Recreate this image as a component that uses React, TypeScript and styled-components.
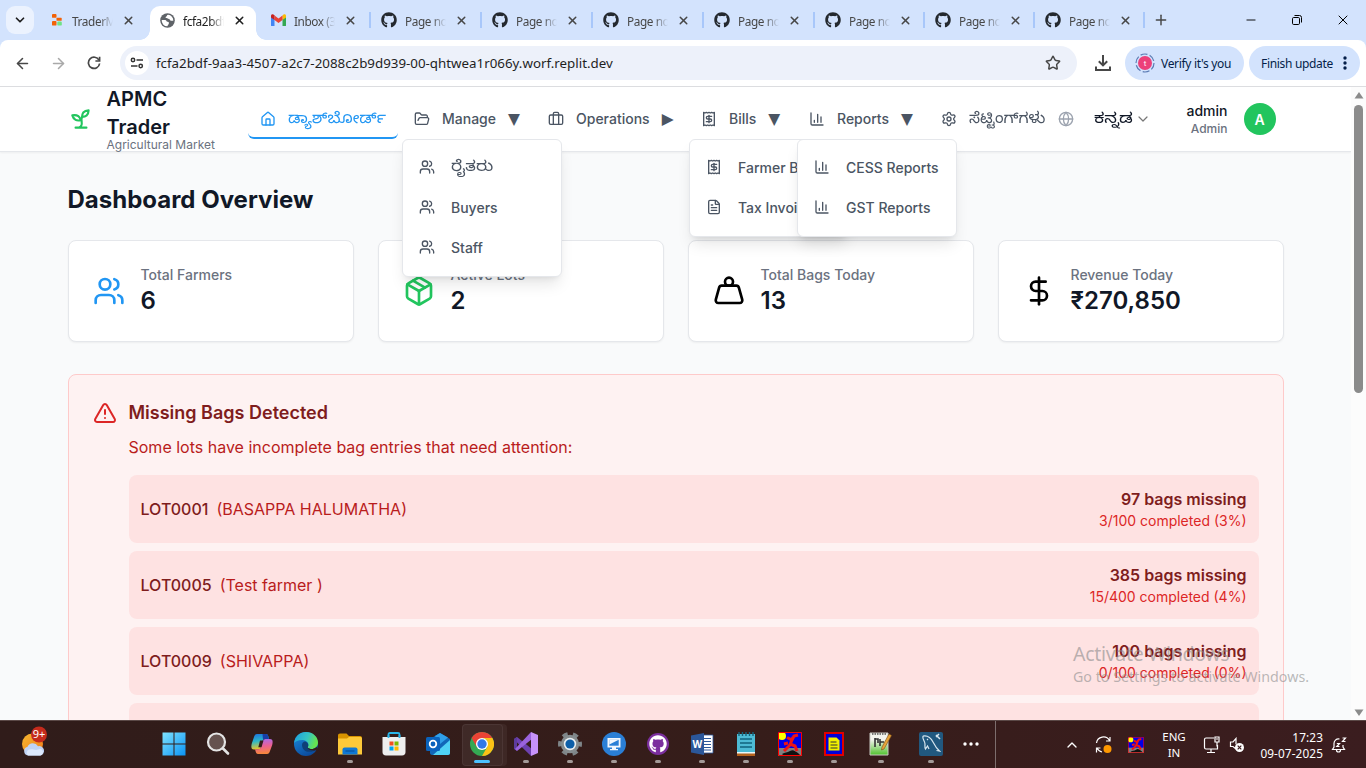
import React from 'react';
import styled, { createGlobalStyle } from 'styled-components';
import {
  Home, FolderOpen, Briefcase, Receipt, Settings, Globe, ChevronDown, Users, FileText,
  Package, Weight, DollarSign, TriangleAlert, X, Plus, Minus, ArrowLeft, ArrowRight, Star, ChevronUp,
} from 'lucide-react';
import { FaGithub } from 'react-icons/fa';

const GlobalStyle = createGlobalStyle`
  * { box-sizing: border-box; }
  body { margin: 0; overflow: hidden; font-family: Inter, "Noto Sans", sans-serif; }
  h1, h2, h3, p { margin: 0; }
  svg { display: block; flex: none; }
`;

const ui = `"Noto Sans", "Open Sans", sans-serif`;

const Screen = styled.div`
  position: relative;
  width: 1366px;
  height: 768px;
  display: flex;
  flex-direction: column;
  overflow: hidden;
`;

/* ---------- browser chrome ---------- */

const TabStrip = styled.div`
  height: 40px;
  flex: none;
  display: flex;
  background: #d3e3fd;
  font: 12px ${ui};
  color: #474747;
`;

const TabSearch = styled.div`
  width: 28px;
  height: 28px;
  margin: 6px 6px 0;
  border-radius: 9px;
  background: #ebf2fe;
  display: flex;
  align-items: center;
  justify-content: center;
  color: #1f1f1f;
`;

const Tab = styled.div<{ $w: number; $active?: boolean; $sep?: boolean; $pad?: number }>`
  position: relative;
  width: ${p => p.$w}px;
  height: 34px;
  margin-top: 6px;
  padding: 0 0 6px ${p => p.$pad ?? 10}px;
  display: flex;
  align-items: center;
  border-radius: 10px 10px 0 0;
  background: ${p => (p.$active ? '#fff' : 'transparent')};
  color: ${p => (p.$active ? '#1f1f1f' : '#474747')};
  &::before {
    content: '';
    display: ${p => (p.$active || p.$sep ? 'block' : 'none')};
    position: absolute;
    left: ${p => (p.$active ? -10 : 0)}px;
    bottom: ${p => (p.$active ? 0 : 12)}px;
    width: ${p => (p.$active ? 10 : 2)}px;
    height: ${p => (p.$active ? 10 : 16)}px;
    background: ${p => (p.$active ? 'radial-gradient(circle at 0 0, transparent 9.5px, #fff 10px)' : '#a8c7fa')};
  }
  &::after {
    content: '';
    display: ${p => (p.$active ? 'block' : 'none')};
    position: absolute;
    right: -10px;
    bottom: 0;
    width: 10px;
    height: 10px;
    background: radial-gradient(circle at 10px 0, transparent 9.5px, #fff 10px);
  }
`;

const TabTitle = styled.span`
  width: 41px;
  margin: 1px 9px 0 8px;
  overflow: hidden;
  white-space: nowrap;
  font-size: 11.8px;
  letter-spacing: -0.4px;
  mask-image: linear-gradient(90deg, #000 66%, transparent 100%);
`;

const NewTab = styled.div`
  position: relative;
  width: 40px;
  height: 28px;
  margin-top: 6px;
  display: flex;
  align-items: center;
  padding-left: 10px;
  &::before {
    content: '';
    position: absolute;
    left: 0;
    top: 6px;
    width: 2px;
    height: 16px;
    background: #a8c7fa;
  }
`;

const WindowButtons = styled.div`
  margin-left: auto;
  height: 40px;
  display: flex;
  color: #000;
`;

const WindowButton = styled.div`
  width: 46px;
  display: flex;
  align-items: center;
  justify-content: center;
`;

const ToolbarBack = styled.div`
  height: 47px;
  flex: none;
  background: #d3e3fd;
`;

const Toolbar = styled.div`
  height: 47px;
  padding-left: 4px;
  display: flex;
  align-items: center;
  background: #fff;
  border-radius: 8px 8px 0 0;
  border-bottom: 1px solid #dcdde0;
  font: 12px ${ui};
  color: #474747;
`;

const NavButton = styled.div<{ $dim?: boolean; $ml?: number }>`
  width: 36px;
  margin-left: ${p => p.$ml ?? 0}px;
  display: flex;
  justify-content: center;
  color: ${p => (p.$dim ? '#a9a9a9' : '#474747')};
`;

const AddressBar = styled.div`
  width: 957px;
  height: 34px;
  margin-left: 8px;
  padding: 0 16px 0 5px;
  border-radius: 17px;
  background: #edf1fa;
  display: flex;
  align-items: center;
`;

const SiteInfo = styled.div`
  width: 24px;
  height: 24px;
  border-radius: 50%;
  background: #fff;
  display: flex;
  align-items: center;
  justify-content: center;
`;

const Url = styled.span`
  flex: 1;
  margin-left: 7px;
  font-size: 13.33px;
  color: #1f1f1f;
  white-space: nowrap;
`;

const Pill = styled.div<{ $w: number; $ml: number; $pl: number; $gap: number }>`
  width: ${p => p.$w}px;
  height: 34px;
  margin-left: ${p => p.$ml}px;
  padding-left: ${p => p.$pl}px;
  border-radius: 17px;
  background: #d3e3fd;
  display: flex;
  align-items: center;
  gap: ${p => p.$gap}px;
  color: #041e49;
  letter-spacing: -0.32px;
  white-space: nowrap;
`;

/* ---------- page ---------- */

const Viewport = styled.div`
  height: 633px;
  flex: none;
  display: flex;
  overflow: hidden;
  background: #f9fafb;
`;

const Page = styled.div`
  width: 1351px;
  height: 633px;
  overflow: hidden;
  color: #111827;
`;

const Header = styled.header`
  height: 65px;
  background: #fff;
  border-bottom: 1px solid #e5e7eb;
  box-shadow: 0 1px 2px rgba(0, 0, 0, 0.05);
`;

const HeaderInner = styled.div`
  width: 1216px;
  height: 64px;
  margin: 0 auto;
  display: flex;
  align-items: center;
`;

const Brand = styled.div`
  width: 180.5px;
  display: flex;
  align-items: center;
  gap: 13px;
  color: #22c55e;
`;

const BrandTitle = styled.h1`
  width: 80px;
  font-size: 20px;
  line-height: 28px;
  font-weight: 600;
  color: #111827;
`;

const BrandSub = styled.p`
  margin-top: -4px;
  font-size: 12px;
  line-height: 16px;
  color: #6b7280;
  white-space: nowrap;
`;

const Nav = styled.nav`
  display: flex;
  gap: 4px;
  height: 64px;
  align-items: center;
`;

const NavItem = styled.div<{ $w: number; $active?: boolean }>`
  position: relative;
  width: ${p => p.$w}px;
  height: 40px;
  padding: 0 12px;
  display: flex;
  align-items: center;
  gap: 12px;
  border-radius: 6px;
  border-bottom: 2px solid ${p => (p.$active ? '#2196f3' : 'transparent')};
  padding-top: 1px;
  font-size: 14px;
  font-weight: 500;
  color: ${p => (p.$active ? '#2196f3' : '#4b5563')};
  white-space: nowrap;
`;

const Arrow = styled.span`
  font: 15.5px/16px "DejaVu Sans", sans-serif;
`;

const Menu = styled.div`
  position: absolute;
  left: 0;
  top: 40px;
  width: 160px;
  padding: 7px 0 9px;
  z-index: 10;
  background: #fff;
  border: 1px solid #e5e7eb;
  border-radius: 6px;
  box-shadow: 0 10px 15px -3px rgba(0, 0, 0, 0.1), 0 4px 6px -4px rgba(0, 0, 0, 0.1);
`;

const MenuItem = styled.div`
  height: 40px;
  padding-left: 16px;
  display: flex;
  align-items: center;
  gap: 16px;
  color: #4b5563;
`;

const Kannada = styled.span<{ $w: number; $stretch: number; $size?: number }>`
  width: ${p => p.$w}px;
  padding-top: 4px;
  font-family: "Noto Sans Kannada", "Nirmala UI", Inter, sans-serif;
  font-size: ${p => p.$size ?? 15}px;
  font-weight: 400;
  line-height: 20px;
  white-space: nowrap;
  transform: scaleX(${p => p.$stretch});
  transform-origin: 0 50%;
`;

const Account = styled.div`
  flex: 1;
  display: flex;
  align-items: center;
  padding-right: 8px;
  color: #9ca3af;
`;

const Language = styled.div`
  margin-left: 20px;
  display: flex;
  align-items: center;
  color: #111827;
`;

const UserName = styled.div`
  margin-left: auto;
  text-align: right;
  font-size: 14px;
  line-height: 20px;
  font-weight: 500;
  color: #111827;
`;

const UserRole = styled.div`
  font-size: 12px;
  line-height: 16px;
  color: #6b7280;
`;

const Avatar = styled.div`
  width: 32px;
  height: 32px;
  margin-left: 16px;
  border-radius: 50%;
  background: #22c55e;
  color: #fff;
  display: flex;
  align-items: center;
  justify-content: center;
  font-size: 14px;
  font-weight: 600;
`;

const Main = styled.main`
  width: 1216px;
  margin: 0 auto;
  padding-top: 32px;
`;

const PageTitle = styled.h2`
  margin-bottom: 24px;
  font-size: 24px;
  line-height: 32px;
  font-weight: 700;
`;

const Stats = styled.div`
  display: grid;
  grid-template-columns: repeat(4, 1fr);
  gap: 24px;
`;

const StatCard = styled.div<{ $color: string }>`
  height: 102px;
  padding: 24px;
  display: flex;
  align-items: center;
  gap: 16px;
  background: #fff;
  border: 1px solid #e5e7eb;
  border-radius: 8px;
  box-shadow: 0 1px 2px rgba(0, 0, 0, 0.05);
  color: ${p => p.$color};
`;

const StatLabel = styled.p`
  font-size: 14px;
  line-height: 20px;
  font-weight: 500;
  color: #6b7280;
`;

const StatValue = styled.p`
  font-size: 24px;
  line-height: 32px;
  font-weight: 600;
  color: #111827;
`;

const Alert = styled.section`
  margin-top: 32px;
  padding: 24px;
  display: flex;
  gap: 12px;
  background: #fef2f2;
  border: 1px solid #fecaca;
  border-radius: 8px;
  color: #dc2626;
  & > svg { margin-top: 2px; }
`;

const AlertBody = styled.div`
  flex: 1;
`;

const AlertTitle = styled.h3`
  font-size: 18px;
  line-height: 28px;
  font-weight: 600;
  color: #7f1d1d;
`;

const AlertText = styled.p`
  margin: 8px 0 16px;
  font-size: 16px;
  line-height: 24px;
  color: #b91c1c;
`;

const Lot = styled.div`
  height: 68px;
  margin-bottom: 8px;
  padding: 12px;
  display: flex;
  align-items: center;
  justify-content: space-between;
  background: #fee2e2;
  border-radius: 8px;
  font-size: 16px;
  line-height: 24px;
`;

const LotId = styled.span`
  font-weight: 500;
  color: #7f1d1d;
`;

const Farmer = styled.span`
  margin-left: 8px;
  color: #b91c1c;
`;

const Missing = styled.div`
  text-align: right;
  font-weight: 600;
  color: #7f1d1d;
`;

const Progress = styled.div`
  font-size: 14px;
  line-height: 20px;
  font-weight: 400;
  color: #dc2626;
`;

const Scrollbar = styled.div`
  width: 15px;
  height: 633px;
  padding: 5px 0 4px;
  display: flex;
  flex-direction: column;
  align-items: center;
  background: #fcfcfc;
  color: #8b8b8b;
`;

const Thumb = styled.div`
  width: 9px;
  height: 288px;
  margin: 6px 0 auto;
  border-radius: 5px;
  background: #8b8b8b;
`;

const Watermark = styled.div`
  position: absolute;
  left: 1073px;
  top: 641px;
  z-index: 30;
  font: 14.25px/20px ${ui};
  color: rgba(140, 140, 140, 0.6);
  white-space: nowrap;
`;

const WatermarkTitle = styled.div`
  font-size: 19.5px;
  line-height: 26px;
  letter-spacing: -0.3px;
`;

/* ---------- taskbar ---------- */

const Taskbar = styled.div`
  height: 48px;
  flex: none;
  display: flex;
  border-top: 1px solid #5b4947;
  background: linear-gradient(90deg, #301c1a, #361d1a 55%, #3b1d1f);
  color: #fff;
  font: 12px ${ui};
`;

const Weather = styled.div`
  width: 152px;
  padding: 5px 0 0 20px;
`;

const Task = styled.div<{ $w?: number; $run?: boolean; $current?: boolean }>`
  position: relative;
  width: ${p => p.$w ?? 44}px;
  height: 46px;
  display: flex;
  align-items: center;
  justify-content: center;
  &::after {
    content: '';
    display: ${p => (p.$run || p.$current ? 'block' : 'none')};
    position: absolute;
    bottom: 4px;
    width: ${p => (p.$current ? 16 : 6)}px;
    height: 3px;
    border-radius: 2px;
    background: ${p => (p.$current ? '#4cc2ff' : '#a39a98')};
  }
  &::before {
    content: '';
    display: ${p => (p.$current ? 'block' : 'none')};
    position: absolute;
    left: 2px;
    top: 3px;
    width: 39px;
    height: 40px;
    border-radius: 4px;
    background: rgba(255, 255, 255, 0.06);
    border: 1px solid rgba(255, 255, 255, 0.06);
    box-shadow: 4px 0 0 rgba(255, 255, 255, 0.05);
  }
  & > svg { position: relative; }
`;

const Tray = styled.div`
  flex: 1;
  margin-left: 9px;
  border-left: 1px solid #7d6e6d;
  display: flex;
  align-items: center;
`;

const TrayCell = styled.div<{ $w: number }>`
  width: ${p => p.$w}px;
  display: flex;
  justify-content: center;
  text-align: center;
  line-height: 16px;
  font-size: 11.5px;
`;

const Clock = styled.div`
  width: 77px;
  text-align: right;
  line-height: 16px;
  font-size: 11.8px;
  letter-spacing: 0.1px;
  white-space: nowrap;
`;

/* ---------- drawings ---------- */

const Sprout = () => (
  <svg width="26" height="26" viewBox="0 0 24 24" fill="none" stroke="currentColor" strokeWidth="2" strokeLinecap="round" strokeLinejoin="round">
    <path d="M7 20h10M10 20c5.5-2.5.8-6.4 3-10" />
    <path d="M9.5 9.4c1.1.8 1.8 2.2 2.3 3.7-2 .4-3.5.4-4.8-.3-1.2-.6-2.3-1.9-3-4.2 2.8-.5 4.4 0 5.5.8z" />
    <path d="M14.1 6a7 7 0 0 0-1.1 4c1.9-.1 3.3-.6 4.3-1.4 1-1 1.6-2.3 1.7-4.6-2.7.1-4 1-4.9 2z" />
  </svg>
);

const Bars = () => (
  <svg width="16" height="16" viewBox="0 0 24 24" fill="none" stroke="currentColor" strokeWidth="2" strokeLinecap="round" strokeLinejoin="round">
    <path d="M3 3v16a2 2 0 0 0 2 2h16M18 17V9M13 17V5M8 17v-3" />
  </svg>
);

const ReplitIcon = () => (
  <svg width="14" height="14" viewBox="0 0 14 14">
    <rect x="2" y="1" width="4.500" height="3.800" rx=".9" fill="#f26207" />
    <rect x="6.500" y="4.800" width="5.200" height="3" rx=".6" fill="#f26207" />
    <rect x="2" y="8" width="4.500" height="4.600" rx=".9" fill="#f26207" />
    <rect x="7.300" y="8.600" width="4.500" height="4" rx="1.200" fill="#6fe384" />
  </svg>
);

const PlanetIcon = () => (
  <svg width="15" height="15" viewBox="0 0 16 16">
    <circle cx="8" cy="8" r="7.800" fill="#5f6368" />
    <path d="M1.800 7.500h3.700c1.500 0 1 1.800 2.600 1.900 1.800.1 1.600 1.600 1 2.700-.4.800-1 1.300-1.300 2.100A6.200 6.200 0 0 1 1.800 7.500z" fill="#fff" />
    <path d="M8.700 1.900c-1.900.2-.9 1.700-2.300 2-.9.300-.4 1.400.6 1.500 1.100.100 1.400.9 2.500.9 1.300.100 1 1.900 2.300 1.900h2.400A6.200 6.200 0 0 0 8.700 1.900z" fill="#fff" />
  </svg>
);

const GmailIcon = () => (
  <svg width="15" height="12" viewBox="0 0 15 12">
    <path d="M0 2v9a.9.9 0 0 0 1 1h2.500V5z" fill="#4285f4" />
    <path d="M11.500 5v7H14a.9.9 0 0 0 1-1V2z" fill="#34a853" />
    <path d="M11.500 1.500V6L15 3.500V2c0-1.800-1.900-2.500-3.500-.5z" fill="#fbbc04" />
    <path d="M3.500 6V1.500l4 3 4-3V6l-4 3z" fill="#ea4335" />
    <path d="M0 2v1.500L3.500 6V1.500C2-.5 0 .2 0 2z" fill="#c5221f" />
  </svg>
);

const ReloadIcon = () => (
  <svg width="14" height="14" viewBox="0 0 14 14" fill="none" stroke="currentColor" strokeWidth="1.7">
    <path d="M12 4.200A5.600 5.600 0 1 0 12.600 7.500" />
    <path d="M12.600.8v4.200H8.400" />
  </svg>
);

const TuneIcon = () => (
  <svg width="14" height="12" viewBox="0 0 14 12" fill="none" stroke="#333" strokeWidth="1.500">
    <circle cx="3" cy="3" r="1.700" />
    <path d="M6.500 3H13M1 9h6.500" />
    <circle cx="10.700" cy="9" r="1.700" />
  </svg>
);

const DownloadIcon = () => (
  <svg width="18" height="18" viewBox="0 0 18 18" fill="none" stroke="#474747" strokeWidth="2">
    <path d="M9 1v10M4.800 7.200 9 11.400l4.200-4.200M2 12.500V16h14v-3.500" />
  </svg>
);

const ProfileIcon = () => (
  <svg width="20" height="20" viewBox="0 0 20 20">
    <circle cx="10" cy="10" r="9" fill="none" stroke="#5b7bb4" strokeWidth="1.200" strokeDasharray="7 2.400" />
    <circle cx="10" cy="10" r="7" fill="#ec407a" />
    <text x="10" y="13" fontSize="8" fill="#fff" textAnchor="middle" fontFamily="Roboto, sans-serif">t</text>
  </svg>
);

const DotsVertical = () => (
  <svg width="4" height="16" viewBox="0 0 4 16" fill="#041e49">
    <circle cx="2" cy="3" r="1.700" /><circle cx="2" cy="8" r="1.700" /><circle cx="2" cy="13" r="1.700" />
  </svg>
);

const RestoreIcon = () => (
  <svg width="10" height="10" viewBox="0 0 10 10" fill="none" stroke="#000">
    <rect x=".5" y="2.500" width="7" height="7" rx="1.200" />
    <path d="M2.500.5h5a2 2 0 0 1 2 2v5" />
  </svg>
);

const WeatherIcon = () => (
  <svg width="30" height="32" viewBox="0 0 30 32">
    <defs><linearGradient id="sun" x2="1" y2="1"><stop stopColor="#f5b931" /><stop offset="1" stopColor="#f07818" /></linearGradient></defs>
    <circle cx="12.500" cy="18" r="10.500" fill="url(#sun)" />
    <path d="M8 29.500a4.500 4.500 0 0 1-.5-8.800 6 6 0 0 1 10.500-.5 4.500 4.500 0 0 1 2.500 9.300z" fill="#bfd3f5" />
    <path d="M8 29.500a4 4 0 0 1 0-5.500c4-2 7 1 10-.5 3-1.500 5 .5 5 3-.5 2-1.500 3-3 3z" fill="#dce8fc" />
    <circle cx="19" cy="8.500" r="8" fill="#c42b1c" />
    <text x="19" y="12.200" fontSize="11" fill="#fff" textAnchor="middle" fontFamily="Noto Sans, sans-serif">9+</text>
  </svg>
);

const WindowsIcon = () => (
  <svg width="24" height="24" viewBox="0 0 24 24">
    <defs><linearGradient id="win" x2="1" y2="1"><stop stopColor="#7fe3ff" /><stop offset="1" stopColor="#0a93f5" /></linearGradient></defs>
    <path d="M.5.500h11v11H.5zM12.500.5h11v11h-11zM.5 12.500h11v11H.5zM12.500 12.500h11v11h-11z" fill="url(#win)" />
  </svg>
);

const SearchIcon = () => (
  <svg width="24" height="24" viewBox="0 0 24 24">
    <circle cx="10.500" cy="10" r="8.500" fill="#65524f" stroke="#e4e4e4" strokeWidth="2.200" />
    <path d="m17 16.500 5 5" stroke="#e4e4e4" strokeWidth="2.600" strokeLinecap="round" />
  </svg>
);

const CopilotIcon = () => (
  <svg width="24" height="24" viewBox="0 0 24 24">
    <defs>
      <linearGradient id="copA" x2=".2" y2="1"><stop stopColor="#1d6fe0" /><stop offset=".5" stopColor="#2cb7c9" /><stop offset="1" stopColor="#e8c52c" /></linearGradient>
      <linearGradient id="copB" x2=".1" y2="1"><stop stopColor="#a66bf0" /><stop offset=".5" stopColor="#ea6095" /><stop offset="1" stopColor="#f7863d" /></linearGradient>
    </defs>
    <path d="M7 2h9c1.500 0 2 1 2.500 3l.5 2h-4c-1.500 0-2.300 1-2.700 2.500L11 15c-.5 1.500-1 2.500-3 2.500H4c-3 0-3-3-2.200-6L4 5c.6-2 1.400-3 3-3z" fill="url(#copA)" />
    <path d="M17 22H8c-1.500 0-2-1-2.500-3L5 17.300h3c2 0 2.500-1 3-2.500l1.700-5.500C13 8 14 7 15.500 7H20c3 0 3 3 2.200 6L20 19c-.6 2-1.400 3-3 3z" fill="url(#copB)" />
    <path d="M12.500 2H16c1.500 0 2 1 2.500 3l.5 2h-4c-.9 0-1.500.4-2 1z" fill="#173fa8" />
    <path d="M10 8.500h3.500l-2 6.700H8.300z" fill="#341d1b" />
  </svg>
);

const EdgeIcon = () => (
  <svg width="24" height="24" viewBox="0 0 24 24">
    <defs>
      <linearGradient id="edA" x2="1" y2=".3"><stop stopColor="#1b9de2" /><stop offset=".6" stopColor="#35c5c3" /><stop offset="1" stopColor="#66e34f" /></linearGradient>
      <linearGradient id="edB" x2=".6" y2="1"><stop stopColor="#1b8fe0" /><stop offset="1" stopColor="#0b4a9c" /></linearGradient>
    </defs>
    <circle cx="12" cy="12" r="12" fill="url(#edB)" />
    <path d="M.1 11C.8 4.600 5.800 0 12 0c7 0 12 5 12 10.500 0 4-3 6.500-6.500 6.500-2.500 0-4.500-1-3.500-2.500C15.500 12 13 8 8.500 8 4 8 1 9.500.1 11z" fill="url(#edA)" />
    <path d="M8 13c0-2 1.200-3.300 2.800-3.600C13.500 10 15 12.500 14 14.500c-1 1.500 1 2.500 3.500 2.500 1.800 0 3.500-.6 4.800-1.800l.5 2c-2 2-8 4-11.800 1.500C9 17.500 8 15 8 13z" fill="#0f3f78" />
    <path d="M14 14.500c-1 1.500 1 2.500 3.500 2.500 2 0 4-.9 5.200-2.300L23.500 18c-3 1-9 .5-10-2z" fill="#341d1b" />
  </svg>
);

const FolderIcon = () => (
  <svg width="24" height="24" viewBox="0 0 24 24">
    <path d="M0 3.500C0 2.400.8 1.500 2 1.500h6.500L11 4h11c1.200 0 2 .8 2 2v4H0z" fill="#d89300" />
    <path d="M0 6.500h9L11 5h11c1.200 0 2 .6 2 1.700V22.500H0z" fill="#fdc93a" />
    <path d="M4.500 22.500v-5c0-1.200 1-2 2-2h11c1 0 2 .8 2 2v5z" fill="#0f78d4" />
    <path d="M7.500 19h9" stroke="#0b5aa8" strokeWidth="1.500" />
  </svg>
);

const StoreIcon = () => (
  <svg width="24" height="24" viewBox="0 0 24 24">
    <path d="M6.500 6V2.500C6.500 1.700 7 1 8 1h8c1 0 1.500.7 1.500 1.500V6" fill="none" stroke="#29b6ea" strokeWidth="1.800" />
    <path d="M.5 5h23v15c0 2-1.200 3.500-3.500 3.500H4C1.700 23.500.5 22 .5 20z" fill="#eee" />
    <path d="M6.500 3v3M17.500 3v3" stroke="#29b6ea" strokeWidth="1.800" />
    <path d="M7.500 9.500h4v4h-4z" fill="#f25022" /><path d="M12.500 9.500h4v4h-4z" fill="#7fba00" />
    <path d="M7.500 14.500h4v4h-4z" fill="#00a4ef" /><path d="M12.500 14.500h4v4h-4z" fill="#ffb900" />
  </svg>
);

const OutlookIcon = () => (
  <svg width="24" height="24" viewBox="0 0 24 24">
    <path d="M4 7 14 1l10 6v14c0 1-1 2-2 2H6c-1 0-2-1-2-2z" fill="#1167b8" />
    <path d="M9 4l5-3 8 4.500L14 12z" fill="#2f9fe8" />
    <path d="M24 8v13c0 1-1 2-2 2H7z" fill="#4fd2f5" />
    <rect x="0" y="5" width="14" height="14" rx="1.500" fill="#0a63bd" />
    <circle cx="7" cy="12" r="3.300" fill="none" stroke="#fff" strokeWidth="1.800" />
  </svg>
);

const ChromeIcon = () => (
  <svg width="24" height="24" viewBox="0 0 24 24">
    <circle cx="12" cy="12" r="12" fill="#34a853" />
    <path d="M12 0a12 12 0 0 1 10.400 6H12L6.800 15 1.600 6A12 12 0 0 1 12 0z" fill="#ea4335" />
    <path d="M22.400 6A12 12 0 0 1 12 24l5.200-9L17 8l-5-2z" fill="#fbc116" />
    <circle cx="12" cy="12" r="6" fill="#fff" /><circle cx="12" cy="12" r="4.700" fill="#3178e8" />
  </svg>
);

const VisualStudioIcon = () => (
  <svg width="24" height="24" viewBox="0 0 24 24">
    <path d="M0 7l3-2 15 12-1 7L0 7.500z" fill="#6d41b0" />
    <path d="M0 7l3-2v14l-3-2z" fill="#5d3b9c" />
    <path d="M17 0 1 17l2 2L18 7z" fill="#9a63dd" />
    <path d="M17 0l7 3v18l-7 3z" fill="#c793fa" />
  </svg>
);

const GearIcon = () => (
  <svg width="24" height="24" viewBox="0 0 24 24">
    <circle cx="12" cy="12" r="10" fill="none" stroke="#7e8588" strokeWidth="4" strokeDasharray="5.200 5.270" strokeDashoffset="2.600" />
    <circle cx="12" cy="12" r="9.200" fill="#858c8f" />
    <circle cx="12" cy="12" r="6.200" fill="#e9eef0" />
    <circle cx="12" cy="12" r="4.600" fill="#0c5ea8" />
  </svg>
);

const RemoteIcon = () => (
  <svg width="24" height="24" viewBox="0 0 24 24">
    <circle cx="12" cy="12" r="12" fill="#2a7fd6" />
    <path d="M5.500 6h13v9.500h-13zM10 15h4v2.500h-4zM8 17h8v1.300H8z" fill="#f2f7fd" />
    <path d="M7.300 7.800h9.400v5.900H7.300z" fill="#2a7fd6" />
    <path d="M7.300 7.800h9.400L7.300 12.500z" fill="#f2f7fd" />
  </svg>
);

const Disc = styled.div`
  width: 22px;
  height: 22px;
  border-radius: 50%;
  background: #7b2f9e;
  display: flex;
  align-items: center;
  justify-content: center;
  color: #fff;
`;

const WordIcon = () => (
  <svg width="24" height="24" viewBox="0 0 24 24">
    <path d="M12 3h11v18H12z" fill="#fff" stroke="#2b579a" strokeWidth=".8" />
    <path d="M14 6.500h7M14 9.500h7M14 12.500h7M14 15.500h7M14 18h7" stroke="#2b579a" />
    <path d="m1 3.500 13-2.500v22L1 20.500z" fill="#2b579a" />
    <text x="7.300" y="16" fontSize="10" fontWeight="700" fill="#fff" textAnchor="middle" fontFamily="Open Sans, sans-serif">W</text>
  </svg>
);

const NotepadIcon = () => (
  <svg width="24" height="24" viewBox="0 0 24 24">
    <path d="M3 2h18v19H3z" fill="#4dbbd5" /><path d="M3 21h18v3H3z" fill="#b4621e" /><path d="M3 20h18v1.500H3z" fill="#e9f7fb" />
    <path d="M5 0v4M8.500 0v4M12 0v4M15.500 0v4M19 0v4" stroke="#14657c" strokeWidth="1.400" />
    <path d="M6 7h12M6 11h12M6 15h12" stroke="#11647e" strokeWidth="1.700" />
  </svg>
);

const RunnerIcon = ({ size = 24 }: { size?: number }) => (
  <svg width={size} height={size} viewBox="0 0 24 24">
    <path d="M0 0h24v24H0z" fill="#0000e8" />
    <path d="M0 16h24v8H0z" fill="#808080" />
    <path d="M4 22c3-2 5-1 8-3s5 0 8 2l2 2H5z" fill="#111" />
    <circle cx="4" cy="4" r="4" fill="#ff0" />
    <path d="M9 5.500 14 8l2-4 4-1M15 5l-3 8-6 6M12 12l5 2 2 5M6 12l4-1" fill="none" stroke="#f01414" strokeWidth="3" />
    <path d="M.5.5h23v23H.5z" fill="none" stroke="#f00" />
  </svg>
);

const DocBoxIcon = () => (
  <svg width="20" height="24" viewBox="0 0 20 24">
    <rect x="1" y="1" width="18" height="22" fill="#0000d8" stroke="#e00000" strokeWidth="2" />
    <path d="M4.500 5.500h8l3 3v10h-11z" fill="#f2f200" />
    <path d="M6.500 10h6M6.500 13h7M6.500 16h7" stroke="#333" />
  </svg>
);

const NppIcon = () => (
  <svg width="24" height="24" viewBox="0 0 24 24">
    <defs><linearGradient id="npp" x2="0" y2="1"><stop offset=".3" stopColor="#f4f4ee" /><stop offset="1" stopColor="#4fc22c" /></linearGradient></defs>
    <path d="M1 1h18v22H1z" fill="url(#npp)" stroke="#c9c9c2" />
    <path d="M3 2h14" stroke="#555" strokeWidth="1.500" strokeDasharray="1.500 1" />
    <path d="M6 6v9M6 7h3v4M11 10h4M11 7v7" fill="none" stroke="#333" strokeWidth="1.600" />
    <path d="m20 2 2.500 1.500L15 17l-2.500 1 .5-3z" fill="#e8a33a" stroke="#7b4b16" strokeWidth=".6" />
  </svg>
);

const MySqlIcon = () => (
  <svg width="24" height="24" viewBox="0 0 24 24">
    <rect width="24" height="24" rx="2" fill="#21587f" />
    <path d="M4 4c5-1 8 2 10 6 1.500 3 3 6 6.500 9l-3-.5M4 4c-1 3 2 5 2 8 0 2-.5 3 .5 5l2-3 1.500 3M8 7l1 1" fill="none" stroke="#d8e6ef" strokeWidth="1.200" />
    <path d="m17 3 4 4M20 2l-3 3" stroke="#d8e6ef" strokeWidth="1.500" />
  </svg>
);

const DotsIcon = () => (
  <svg width="18" height="4" viewBox="0 0 18 4" fill="#fff"><circle cx="3" cy="2" r="1.700" /><circle cx="9" cy="2" r="1.700" /><circle cx="15" cy="2" r="1.700" /></svg>
);

const SyncIcon = () => (
  <svg width="18" height="18" viewBox="0 0 18 18" fill="none" stroke="#fff" strokeWidth="1.200">
    <path d="M1.500 7a7 7 0 0 1 13-2.500M15 1v4h-4M7 16a7 7 0 0 1-5-4M1.500 16.500v-4.500h4" />
    <circle cx="12.500" cy="13" r="4" fill="#ff9800" stroke="none" />
  </svg>
);

const MonitorIcon = () => (
  <svg width="18" height="18" viewBox="0 0 18 18" fill="none" stroke="#fff" strokeWidth="1.200">
    <path d="M11 2H3a1.500 1.500 0 0 0-1.500 1.500v8A1.500 1.500 0 0 0 3 13h11.500V9M8 13v3.500M4 16.500h8" />
    <path d="M12 1h4v5h-4zM14 6v4.500M13 3h2" />
  </svg>
);

const MutedIcon = () => (
  <svg width="16" height="16" viewBox="0 0 16 16" fill="none" stroke="#fff" strokeWidth="1.200">
    <path d="M7 12 4 9.500H1.500V5H4l3-3.500V7" />
    <circle cx="10.500" cy="10.500" r="4.500" fill="#fff" stroke="none" />
    <path d="m8.700 8.700 3.600 3.600m0-3.600-3.600 3.600" stroke="#3b1d1f" />
  </svg>
);

const SnoozeBell = () => (
  <svg width="16" height="16" viewBox="0 0 16 16" fill="none" stroke="#fff" strokeWidth="1.200">
    <path d="M8.500 2C5 1.500 3 4 3 6.500V10l-1.500 2.500h12L12 10V8M5.500 13a2 2 0 0 0 4 0" />
    <path d="M5.800 6.500h2.700l-2.700 3h2.700M11.500 1h3l-3 3.500h3" />
  </svg>
);

/* ---------- data ---------- */

const githubTabs = [111, 111, 111, 111, 110, 110, 110];

const lots = [
  { id: 'LOT0001', farmer: '(BASAPPA HALUMATHA)', missing: '97 bags missing', done: '3/100 completed (3%)' },
  { id: 'LOT0005', farmer: '(Test farmer )', missing: '385 bags missing', done: '15/400 completed (4%)' },
  { id: 'LOT0009', farmer: '(SHIVAPPA)', missing: '100 bags missing', done: '0/100 completed (0%)' },
];

const stats = [
  { label: 'Total Farmers', value: '6', color: '#2196f3', icon: Users },
  { label: 'Active Lots', value: '2', color: '#22c55e', icon: Package },
  { label: 'Total Bags Today', value: '13', color: '#000', icon: Weight },
  { label: 'Revenue Today', value: '₹270,850', color: '#000', icon: DollarSign },
];

const Close = () => <X size={13} strokeWidth={2.8} />;

export default function App() {
  return (
    <Screen>
      <GlobalStyle />
      <TabStrip>
        <TabSearch><ChevronDown size={14} strokeWidth={3} /></TabSearch>
        <Tab $w={110} $pad={10}><ReplitIcon /><TabTitle>TraderMaster</TabTitle><Close /></Tab>
        <Tab $w={106} $active><PlanetIcon /><TabTitle>fcfa2bdf</TabTitle><Close /></Tab>
        <Tab $w={113} $pad={15}><GmailIcon /><TabTitle>Inbox (3)</TabTitle><Close /></Tab>
        {githubTabs.map((w, i) => (
          <Tab key={i} $w={w} $sep $pad={12}><FaGithub size={16} color="#24292f" /><TabTitle>Page not</TabTitle><Close /></Tab>
        ))}
        <NewTab><Plus size={16} strokeWidth={2.2} /></NewTab>
        <WindowButtons>
          <WindowButton><Minus size={14} strokeWidth={1.6} /></WindowButton>
          <WindowButton><RestoreIcon /></WindowButton>
          <WindowButton><X size={16} strokeWidth={1.5} /></WindowButton>
        </WindowButtons>
      </TabStrip>
      <ToolbarBack>
        <Toolbar>
          <NavButton><ArrowLeft size={17} strokeWidth={2.2} /></NavButton>
          <NavButton $dim><ArrowRight size={17} strokeWidth={2.2} /></NavButton>
          <NavButton><ReloadIcon /></NavButton>
          <AddressBar>
            <SiteInfo><TuneIcon /></SiteInfo>
            <Url>fcfa2bdf-9aa3-4507-a2c7-2088c2b9d939-00-qhtwea1r066y.worf.replit.dev</Url>
            <Star size={16} strokeWidth={2.2} />
          </AddressBar>
          <NavButton $ml={8}><DownloadIcon /></NavButton>
          <Pill $w={119} $ml={4} $pl={10} $gap={6}><ProfileIcon />Verify it's you</Pill>
          <Pill $w={111} $ml={5} $pl={12} $gap={10}>Finish update<DotsVertical /></Pill>
        </Toolbar>
      </ToolbarBack>

      <Viewport>
        <Page>
          <Header>
            <HeaderInner>
              <Brand>
                <Sprout />
                <div>
                  <BrandTitle>APMC Trader</BrandTitle>
                  <BrandSub>Agricultural Market</BrandSub>
                </div>
              </Brand>
              <Nav>
                <NavItem $w={150} $active><Home size={16} /><Kannada $w={99} $stretch={1.085}>ಡ್ಯಾಶ್‌ಬೋರ್ಡ್</Kannada></NavItem>
                <NavItem $w={130}>
                  <FolderOpen size={16} />Manage<Arrow>▼</Arrow>
                  <Menu>
                    <MenuItem><Users size={16} /><Kannada $w={44} $stretch={1.14}>ರೈತರು</Kannada></MenuItem>
                    <MenuItem><Users size={16} />Buyers</MenuItem>
                    <MenuItem><Users size={16} />Staff</MenuItem>
                  </Menu>
                </NavItem>
                <NavItem $w={149}><Briefcase size={16} />Operations<Arrow>▶</Arrow></NavItem>
                <NavItem $w={104}>
                  <Receipt size={16} />Bills<Arrow>▼</Arrow>
                  <Menu>
                    <MenuItem><Receipt size={16} />Farmer Bills</MenuItem>
                    <MenuItem><FileText size={16} />Tax Invoices</MenuItem>
                  </Menu>
                </NavItem>
                <NavItem $w={128}>
                  <Bars />Reports<Arrow>▼</Arrow>
                  <Menu>
                    <MenuItem><Bars />CESS Reports</MenuItem>
                    <MenuItem><Bars />GST Reports</MenuItem>
                  </Menu>
                </NavItem>
                <NavItem $w={129}><Settings size={16} /><Kannada $w={78} $stretch={1.04}>ಸೆಟ್ಟಿಂಗ್‌ಗಳು</Kannada></NavItem>
              </Nav>
              <Account>
                <Globe size={16} />
                <Language><Kannada $w={41} $stretch={1.2}>ಕನ್ನಡ</Kannada><ChevronDown size={16} color="#777" strokeWidth={1.8} /></Language>
                <UserName>admin<UserRole>Admin</UserRole></UserName>
                <Avatar>A</Avatar>
              </Account>
            </HeaderInner>
          </Header>
          <Main>
            <PageTitle>Dashboard Overview</PageTitle>
            <Stats>
              {stats.map(({ label, value, color, icon: Icon }) => (
                <StatCard key={label} $color={color}>
                  <Icon size={32} />
                  <div><StatLabel>{label}</StatLabel><StatValue>{value}</StatValue></div>
                </StatCard>
              ))}
            </Stats>
            <Alert>
              <TriangleAlert size={24} />
              <AlertBody>
                <AlertTitle>Missing Bags Detected</AlertTitle>
                <AlertText>Some lots have incomplete bag entries that need attention:</AlertText>
                {lots.map(l => (
                  <Lot key={l.id}>
                    <div><LotId>{l.id}</LotId><Farmer>{l.farmer}</Farmer></div>
                    <Missing>{l.missing}<Progress>{l.done}</Progress></Missing>
                  </Lot>
                ))}
                <Lot />
              </AlertBody>
            </Alert>
          </Main>
        </Page>
        <Scrollbar>
          <svg width="10" height="7" viewBox="0 0 10 7"><path d="M5 0l4.500 6.500h-9z" fill="currentColor" /></svg>
          <Thumb />
          <svg width="10" height="7" viewBox="0 0 10 7"><path d="M5 7L.5.5h9z" fill="currentColor" /></svg>
        </Scrollbar>
      </Viewport>

      <Taskbar>
        <Weather><WeatherIcon /></Weather>
        <Task><WindowsIcon /></Task>
        <Task><SearchIcon /></Task>
        <Task><CopilotIcon /></Task>
        <Task><EdgeIcon /></Task>
        <Task $run><FolderIcon /></Task>
        <Task><StoreIcon /></Task>
        <Task><OutlookIcon /></Task>
        <Task $current><ChromeIcon /></Task>
        <Task $run><VisualStudioIcon /></Task>
        <Task $run><GearIcon /></Task>
        <Task $run><RemoteIcon /></Task>
        <Task $run><Disc><FaGithub size={18} /></Disc></Task>
        <Task $run><WordIcon /></Task>
        <Task $run><NotepadIcon /></Task>
        <Task $run><RunnerIcon /></Task>
        <Task $run><DocBoxIcon /></Task>
        <Task $w={50} $run><NppIcon /></Task>
        <Task $w={50} $run><MySqlIcon /></Task>
        <Task $w={30}><DotsIcon /></Task>
        <Tray>
          <TrayCell $w={60} />
          <TrayCell $w={32}><ChevronUp size={16} /></TrayCell>
          <TrayCell $w={32}><SyncIcon /></TrayCell>
          <TrayCell $w={32}><RunnerIcon size={16} /></TrayCell>
          <TrayCell $w={44}>ENG<br />IN</TrayCell>
          <TrayCell $w={32}><MonitorIcon /></TrayCell>
          <TrayCell $w={18}><MutedIcon /></TrayCell>
          <Clock>17:23<br />09-07-2025</Clock>
          <TrayCell $w={32}><SnoozeBell /></TrayCell>
        </Tray>
      </Taskbar>

      <Watermark>
        <WatermarkTitle>Activate Windows</WatermarkTitle>
        Go to Settings to activate Windows.
      </Watermark>
    </Screen>
  );
}
